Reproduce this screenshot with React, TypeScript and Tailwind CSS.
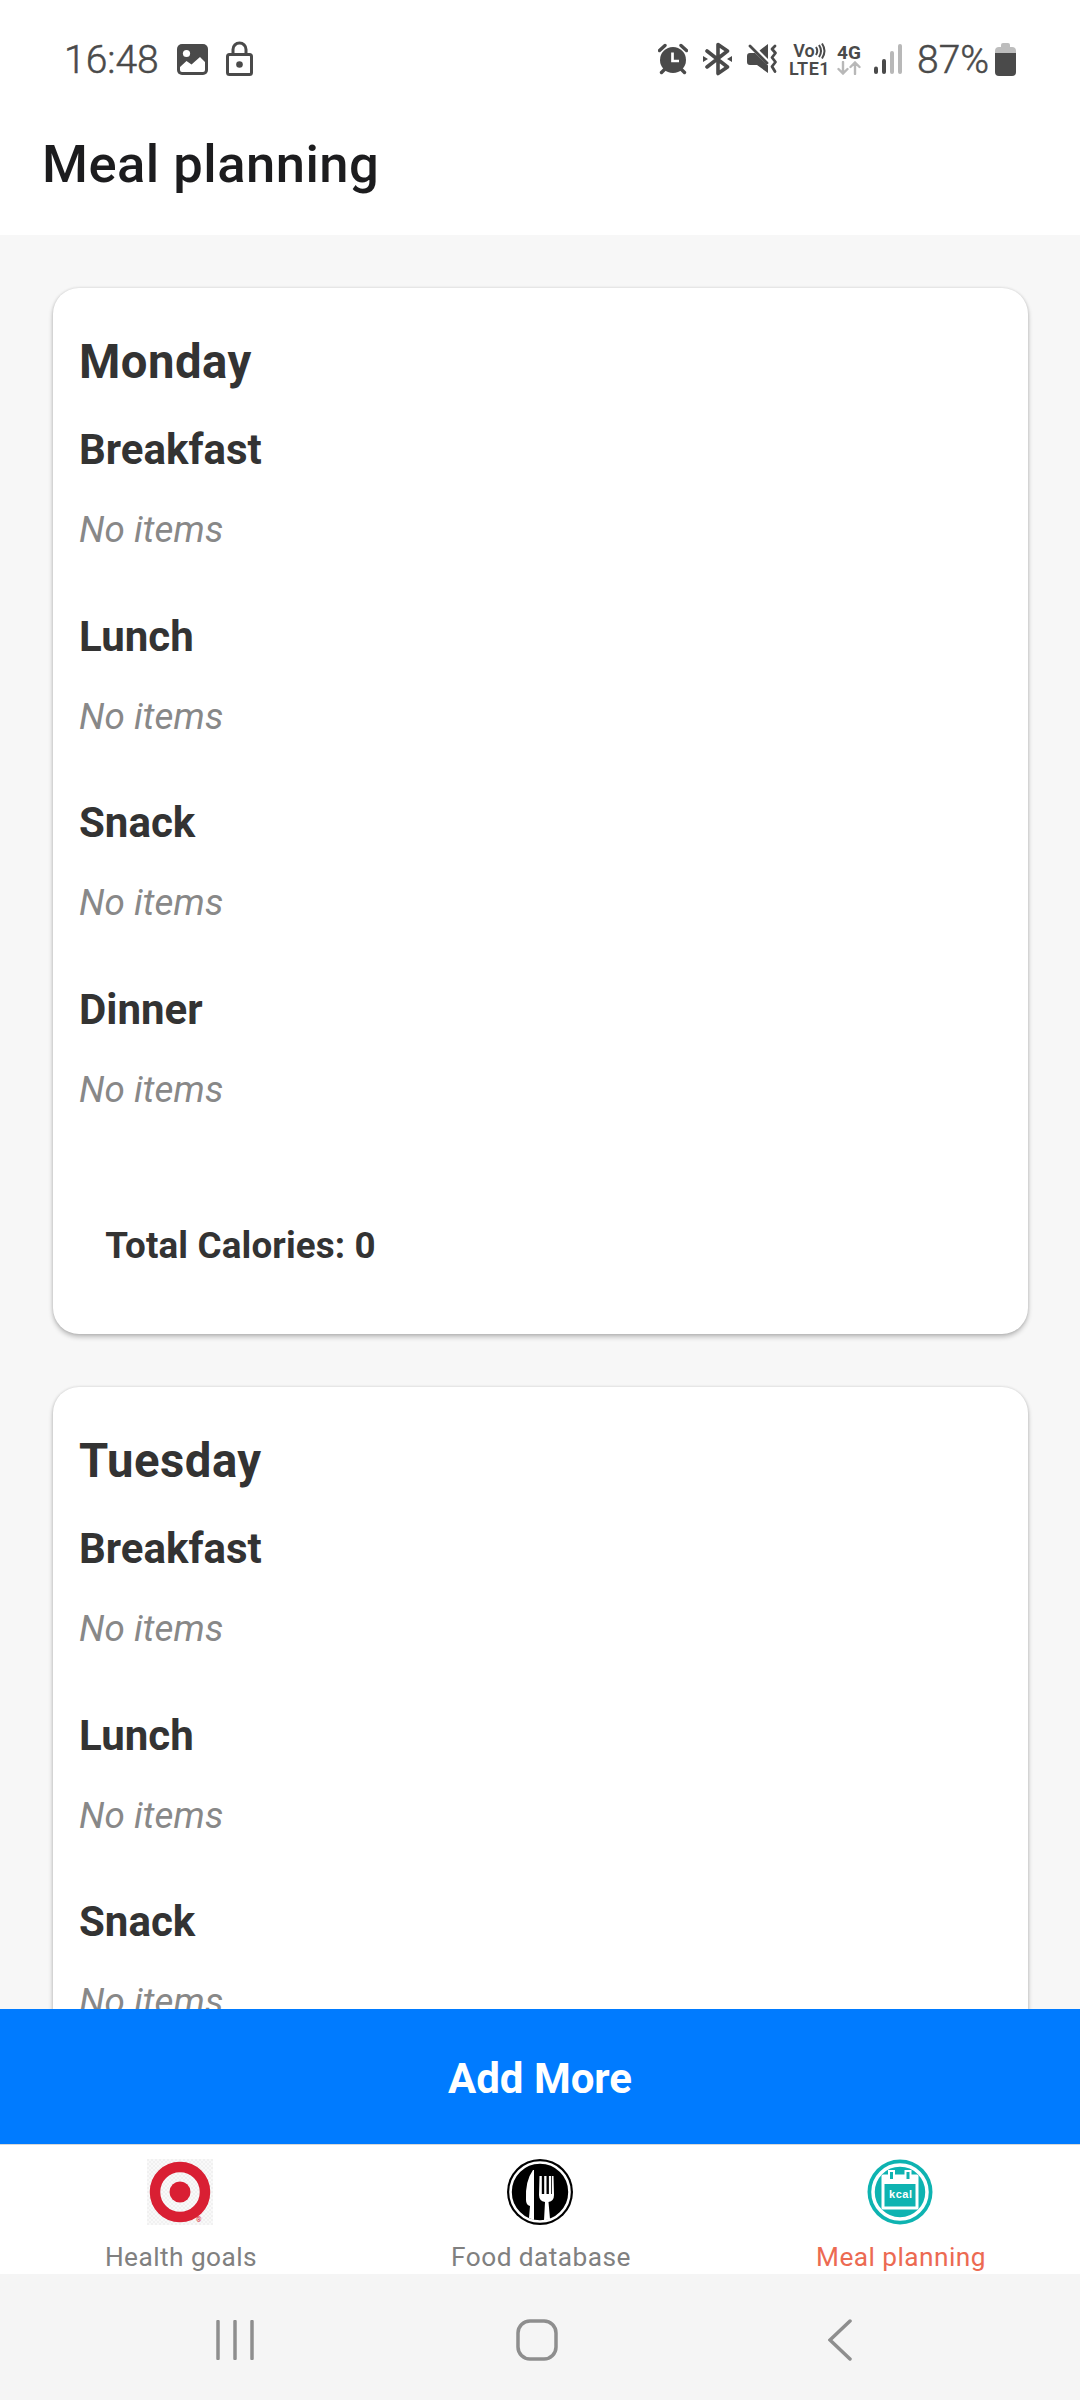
const INK = "#4a4a4a";

function StatusBar() {
  return (
    <div className="flex h-[118px] shrink-0 items-center bg-white pl-[64px] pr-[64px] text-[#4a4a4a]">
      <span className="w-[100px] whitespace-nowrap pt-[2px] text-[39px] leading-[46px] font-light [-webkit-text-stroke:0.5px_#4a4a4a]">16:48</span>
      <svg className="ml-[13px] h-[31px] w-[31px]" viewBox="0 0 31 31">
        <rect width="31" height="31" rx="5" fill={INK} />
        <circle cx="9.5" cy="9.5" r="3.6" fill="#fff" />
        <path d="M3 23 9.5 17l5 3.5L23 13l5 5v8q0 2-2 2H5q-2 0-2-2Z" fill="#fff" />
      </svg>
      <svg className="ml-[18px] h-[36px] w-[27px]" viewBox="0 0 27 36">
        <rect x="1.5" y="13.5" width="24" height="20" rx="2" fill="none" stroke={INK} strokeWidth="3" />
        <path d="M7 13V8.5a6.5 6.5 0 0 1 13 0V13" fill="none" stroke={INK} strokeWidth="3" />
        <circle cx="13.5" cy="23.5" r="3.3" fill={INK} />
      </svg>
      <div className="ml-auto flex items-center">
        <svg className="h-[32px] w-[30px]" viewBox="0 0 30 32">
          <circle cx="15" cy="17" r="13" fill={INK} />
          <path d="M1.5 7.5 7 2.5M28.5 7.5 23 2.5M3.5 29.5 7 26M26.500 29.500 23 26" stroke={INK} strokeWidth="3.4" strokeLinecap="round" />
          <path d="M14.500 9.500V18h6.500" fill="none" stroke="#fff" strokeWidth="2.700" />
        </svg>
        <svg className="ml-[15px] h-[34px] w-[29px]" viewBox="0 0 29 34">
          <path d="M4 9 24.500 25 15 31.500V2.500L24.500 9 4 25" fill="none" stroke={INK} strokeWidth="3.600" strokeLinecap="round" strokeLinejoin="round" />
          <path d="m0 14 5 3-5 3ZM29 14l-5 3 5 3Z" fill={INK} />
        </svg>
        <svg className="ml-[15px] h-[32px] w-[31px]" viewBox="0 0 31 32">
          <path d="M0 13q0-3 3-3h5l13 12.500V30L10 22H3q-3 0-3-3ZM12.500 7.500 21 1v15Z" fill={INK} />
          <path d="M3 3 20 20" stroke={INK} strokeWidth="2.800" strokeLinecap="round" />
          <path d="m28 3-3 3 3.500 4-3.500 4.500 3.500 4.500-3.500 4.500 3 5" fill="none" stroke={INK} strokeWidth="2.800" strokeLinecap="round" strokeLinejoin="round" />
        </svg>
        <div className="ml-[12px] flex w-[39px] flex-col items-center text-[18px] leading-[17px] font-semibold">
          <div className="flex items-center">
            <span>Vo</span>
            <svg className="h-[18px] w-[11px]" viewBox="0 0 11 18">
              <path d="M1 5q2.500 4 0 8M4 3q4 6 0 12M7 1.500q5 7.500 0 15" fill="none" stroke={INK} strokeWidth="2" />
            </svg>
          </div>
          <span className="tracking-[0.5px]">LTE1</span>
        </div>
        <div className="ml-[8px] flex w-[24px] flex-col items-center">
          <span className="text-[19px] leading-[17px] font-bold">4G</span>
          <svg className="h-[14px] w-[24px]" viewBox="0 0 24 14">
            <path d="M6 1v11M1.500 8 6 12.500 10.500 8M18 13V2M13.500 6 18 1.500 22.500 6" fill="none" stroke="#b8b8b8" strokeWidth="2.400" strokeLinecap="round" />
          </svg>
        </div>
        <svg className="ml-[13px] h-[30px] w-[28px]" viewBox="0 0 28 30">
          <rect x="0" y="22.500" width="4" height="7.500" rx="2" fill={INK} />
          <rect x="8" y="15" width="4" height="15" rx="2" fill={INK} />
          <rect x="16" y="7" width="4" height="23" rx="2" fill="#b8b8b8" />
          <rect x="24" y="0" width="4" height="30" rx="2" fill="#b8b8b8" />
        </svg>
        <span className="ml-[15px] w-[73px] whitespace-nowrap pt-[2px] text-[39px] leading-[46px] font-light [-webkit-text-stroke:0.5px_#4a4a4a]">87%</span>
        <svg className="ml-[5px] h-[33px] w-[21px]" viewBox="0 0 21 33">
          <path d="M0 11V8q0-4 4-4h2V2q0-2 2-2h5q2 0 2 2v2h2q4 0 4 4v3Z" fill="#bdbdbd" />
          <path d="M0 10h21v19q0 4-4 4H4q-4 0-4-4Z" fill={INK} />
        </svg>
      </div>
    </div>
  );
}

type Plan = { day: string; meals: string[]; total?: number };

const plans: Plan[] = [
  { day: "Monday", meals: ["Breakfast", "Lunch", "Snack", "Dinner"], total: 0 },
  { day: "Tuesday", meals: ["Breakfast", "Lunch", "Snack"] },
];

function DayCard({ day, meals, total }: Plan) {
  return (
    <section className="h-[1046px] shrink-0 rounded-[26px] bg-white px-[26.500px] pt-[46px] text-[#333333] shadow-[0_3px_5px_rgba(0,0,0,0.24),0_0_3px_rgba(0,0,0,0.14)]">
      <h2 className="text-[47.250px] leading-[56px] font-bold tracking-[0.5px]">{day}</h2>
      <div className="mt-[35px] flex flex-col gap-[59.500px]">
        {meals.map((meal) => (
          <div key={meal}>
            <h3 className="text-[42px] leading-[50px] font-bold">{meal}</h3>
            <p className="mt-[33px] text-[36.750px] leading-[44px] tracking-[0.1px] text-[#888888] italic">No items</p>
          </div>
        ))}
      </div>
      {total !== undefined && (
        <p className="mt-[112px] ml-[26.250px] text-[36.750px] leading-[44px] font-bold tracking-[0.15px]">Total Calories: {total}</p>
      )}
    </section>
  );
}

function TargetIcon() {
  return (
    <svg className="h-[66px] w-[66px]" viewBox="0 0 66 66">
      <defs>
        <pattern id="mesh" width="4" height="4" patternUnits="userSpaceOnUse">
          <rect width="4" height="4" fill="#f9f9f9" />
          <path d="M0 0h2v2H0ZM2 2h2v2H2Z" fill="#f1f1f1" />
        </pattern>
      </defs>
      <rect width="66" height="66" fill="url(#mesh)" />
      <circle cx="33" cy="33" r="25" fill="none" stroke="#d91f33" strokeWidth="10.500" />
      <circle cx="33" cy="33" r="10.500" fill="#d91f33" />
      <text x="49" y="63" fontSize="7" fill="#d91f33">®</text>
    </svg>
  );
}

function CutleryIcon() {
  return (
    <svg className="h-[66px] w-[66px]" viewBox="0 0 66 66">
      <circle cx="33" cy="33" r="33" fill="#000" />
      <circle cx="33" cy="33" r="29.500" fill="none" stroke="#fff" strokeWidth="2.600" />
      <path d="M26 11q-8 11-7 30 0 5 4 6l-1 12 5 2V11Z" fill="#fff" />
      <path d="M32.500 17h2.300v18h2.400V17h2.300v18h2.400V17h2.300v18h.8V17H46.500l.5 19q0 6-5.500 7L43 60l-6 1.500L38 43q-6-1-6-7Z" fill="#fff" />
    </svg>
  );
}

function KcalIcon() {
  return (
    <svg className="h-[66px] w-[66px]" viewBox="0 0 66 66">
      <circle cx="33" cy="33" r="32.500" fill="#0eb3b1" />
      <circle cx="33" cy="33" r="27" fill="none" stroke="#fff" strokeWidth="3.500" />
      <path d="M16 17h34v32H16Z" fill="none" stroke="#fff" strokeWidth="3" strokeLinejoin="round" />
      <path d="M16 17h34v8H16Z" fill="#fff" />
      <path d="M22 12h5v9h-5ZM38.500 12h5v9h-5Z" fill="#0eb3b1" stroke="#fff" strokeWidth="2" />
      <text x="33.500" y="38.500" textAnchor="middle" fontSize="11" fontWeight="700" fontFamily="Liberation Sans, sans-serif" fill="#fff" textLength="23">kcal</text>
    </svg>
  );
}

const tabs = [
  { label: "Health goals", icon: <TargetIcon />, color: "text-[#808080]" },
  { label: "Food database", icon: <CutleryIcon />, color: "text-[#808080]" },
  { label: "Meal planning", icon: <KcalIcon />, color: "text-[#ec6a52]" },
];

export default function App() {
  return (
    <div className="flex h-[2400px] w-[1080px] flex-col overflow-hidden bg-[#f7f7f7] font-['Roboto',sans-serif]">
      <StatusBar />
      <header className="h-[117px] shrink-0 bg-white pl-[42px] pt-[15px]">
        <h1 className="text-[52.500px] leading-[62px] font-medium tracking-[0.5px] text-[#1c1c1e]">Meal planning</h1>
      </header>
      <main className="flex h-[1774px] shrink-0 flex-col gap-[53px] overflow-hidden px-[52.500px] pt-[53px]">
        {plans.map((plan) => (
          <DayCard key={plan.day} {...plan} />
        ))}
      </main>
      <button className="h-[135px] shrink-0 bg-[#007bff] pt-[4px] text-[42px] leading-[50px] font-bold text-white">Add More</button>
      <nav className="grid h-[130px] shrink-0 grid-cols-3 border-t border-[#d8d8d8] bg-white pt-[14px]">
        {tabs.map((tab) => (
          <div key={tab.label} className={`flex flex-col items-center ${tab.color}`}>
            {tab.icon}
            <span className="mt-[16.500px] pl-[2px] text-[26.250px] leading-[31px] tracking-[0.450px]">{tab.label}</span>
          </div>
        ))}
      </nav>
      <footer className="flex h-[126px] shrink-0 items-center bg-[#f5f5f5] pt-[5px] pl-[216px]">
        <svg className="h-[40px] w-[38px]" viewBox="0 0 38 40">
          <path d="M2 1.500v37M19 1.500v37M36 1.500v37" stroke="#8e8e8e" strokeWidth="3.500" strokeLinecap="round" />
        </svg>
        <svg className="ml-[262px] h-[42px] w-[42px]" viewBox="0 0 42 42">
          <rect x="2" y="2" width="38" height="38" rx="12" fill="none" stroke="#8e8e8e" strokeWidth="3.500" />
        </svg>
        <svg className="ml-[270px] h-[42px] w-[24px]" viewBox="0 0 24 42">
          <path d="M22 2 2 21l20 19" fill="none" stroke="#8e8e8e" strokeWidth="3.500" strokeLinecap="round" />
        </svg>
      </footer>
    </div>
  );
}
